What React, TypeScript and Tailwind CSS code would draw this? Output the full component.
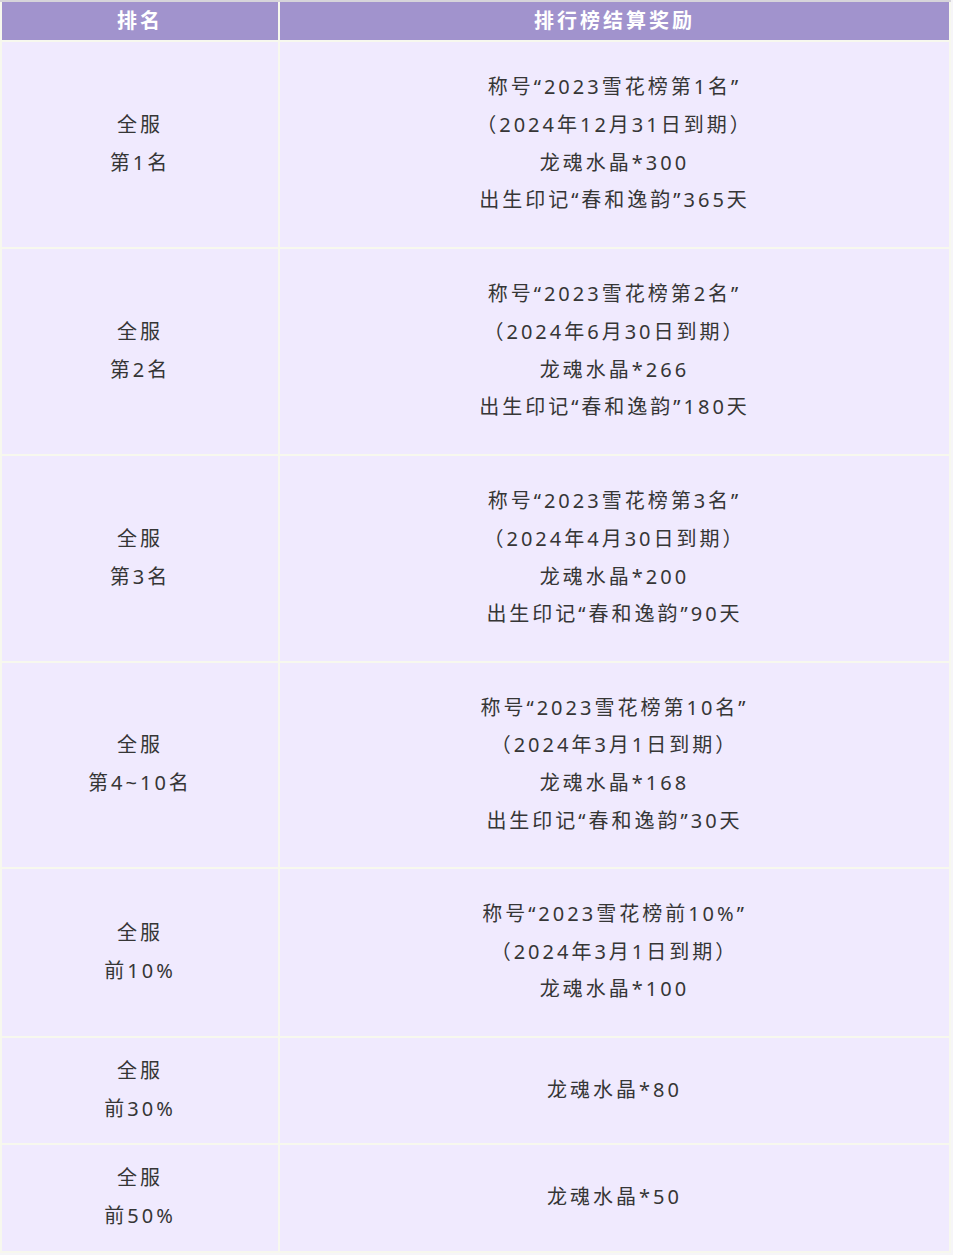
const rows: { rank: string[]; reward: string[]; h: string }[] = [
  {
    rank: ["全服", "第1名"],
    reward: ["称号“2023雪花榜第1名”", "（2024年12月31日到期）", "龙魂水晶*300", "出生印记“春和逸韵”365天"],
    h: "h-[205px]",
  },
  {
    rank: ["全服", "第2名"],
    reward: ["称号“2023雪花榜第2名”", "（2024年6月30日到期）", "龙魂水晶*266", "出生印记“春和逸韵”180天"],
    h: "h-[205px]",
  },
  {
    rank: ["全服", "第3名"],
    reward: ["称号“2023雪花榜第3名”", "（2024年4月30日到期）", "龙魂水晶*200", "出生印记“春和逸韵”90天"],
    h: "h-[205px]",
  },
  {
    rank: ["全服", "第4~10名"],
    reward: ["称号“2023雪花榜第10名”", "（2024年3月1日到期）", "龙魂水晶*168", "出生印记“春和逸韵”30天"],
    h: "h-[204px]",
  },
  {
    rank: ["全服", "前10%"],
    reward: ["称号“2023雪花榜前10%”", "（2024年3月1日到期）", "龙魂水晶*100"],
    h: "h-[167px]",
  },
  { rank: ["全服", "前30%"], reward: ["龙魂水晶*80"], h: "h-[105px]" },
  { rank: ["全服", "前50%"], reward: ["龙魂水晶*50"], h: "h-[106px]" },
];

const Cell = ({ lines, h }: { lines: string[]; h: string }) => (
  <div className={`${h} bg-[#f0eafe] pb-[2px] flex flex-col items-center justify-center text-[20px] leading-[37.7px] tracking-[3px] text-[#363636]`}>
    {lines.map((l, i) => (
      <div key={i}>{l}</div>
    ))}
  </div>
);

export default function App() {
  return (
    <div
      className="w-[953px] h-[1255px] bg-[#f6f5f8]"
      style={{ fontFamily: '"Noto Sans", "Noto Sans CJK SC", sans-serif' }}
    >
      <div className="w-[951px] border-t-2 border-[#d6d4da] bg-[#f7f8ee] px-[2px] pb-[2px] grid grid-cols-[276px_669px] gap-[2px]">
        <div className="h-[38px] bg-[#a193cd] flex items-center justify-center text-white font-bold text-[20px] tracking-[3px]">
          排名
        </div>
        <div className="h-[38px] bg-[#a193cd] flex items-center justify-center text-white font-bold text-[20px] tracking-[3px]">
          排行榜结算奖励
        </div>
        {rows.map((r, i) => (
          <div key={i} className="contents">
            <Cell lines={r.rank} h={r.h} />
            <Cell lines={r.reward} h={r.h} />
          </div>
        ))}
      </div>
    </div>
  );
}
